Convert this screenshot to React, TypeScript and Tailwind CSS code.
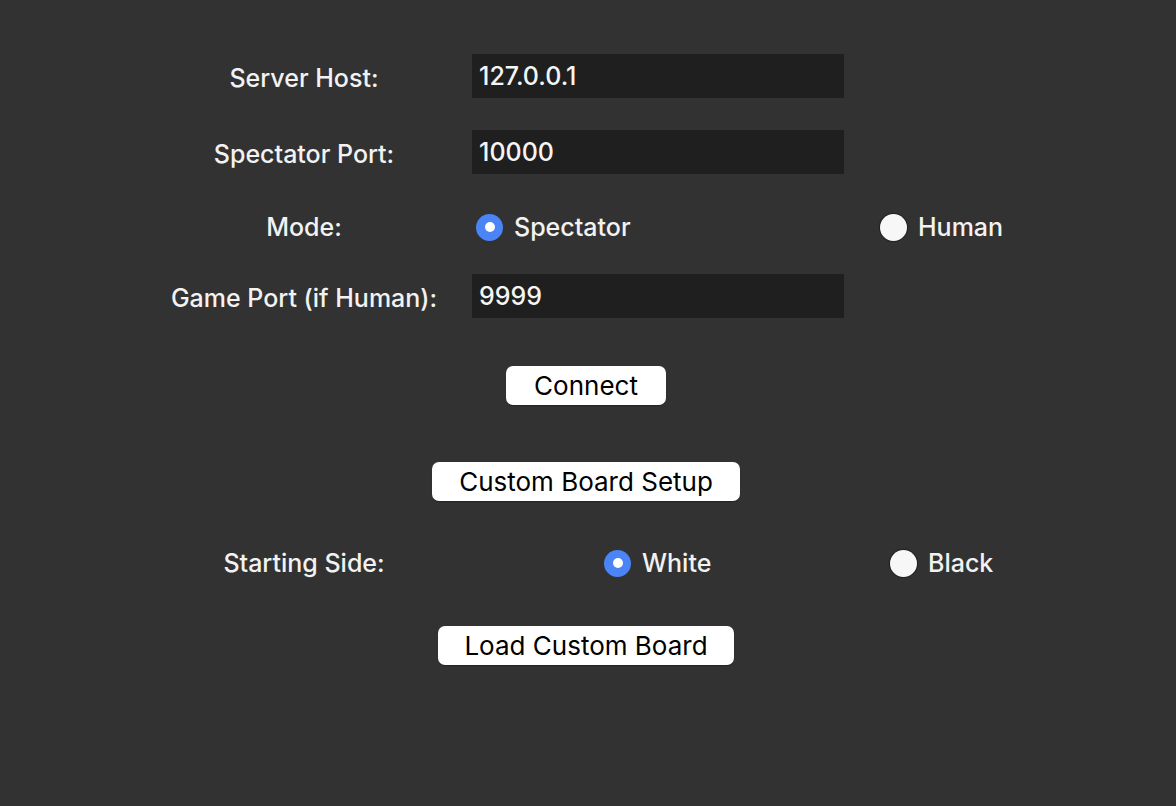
import React, { useState } from "react";

function Radio({
	label,
	checked,
	onSelect,
}: {
	label: string;
	checked: boolean;
	onSelect: () => void;
}) {
	return (
		<button
			type="button"
			onClick={onSelect}
			className="flex items-center gap-[11px] font-medium text-[#f2f2f2]"
		>
			{checked ? (
				<span className="flex h-[27px] w-[27px] items-center justify-center rounded-full bg-[#4a84f5]">
					<span className="h-[10px] w-[10px] rounded-full bg-white" />
				</span>
			) : (
				<span className="h-[27px] w-[27px] rounded-full bg-[#f7f7f7] shadow-[0_0_1px_1px_rgba(0,0,0,0.35)]" />
			)}
			<span>{label}</span>
		</button>
	);
}

function Field({ label, value }: { label: string; value: string }) {
	return (
		<div className="flex h-[44px] items-center">
			<div className="w-[288px] pt-[4px] text-center">{label}</div>
			<input
				defaultValue={value}
				className="ml-[24px] h-[44px] w-[372px] bg-[#1f1f1f] px-[7px] font-medium text-[#f5f5f5] outline-none"
			/>
		</div>
	);
}

function WhiteButton({ children, width }: { children: React.ReactNode; width: string }) {
	return (
		<button
			type="button"
			className={`h-[39px] ${width} rounded-[7px] bg-white text-[26px] font-normal text-black shadow-[0_1px_1px_rgba(0,0,0,0.3)]`}
		>
			{children}
		</button>
	);
}

export default function App() {
	const [mode, setMode] = useState<"spectator" | "human">("spectator");
	const [side, setSide] = useState<"white" | "black">("white");

	return (
		<div className="min-h-[806px] w-full bg-[#323232] font-['Inter','Liberation_Sans',sans-serif] text-[25px] font-medium leading-none text-[#f2f2f2]">
			<div className="pl-[160px] pt-[54px]">
				<Field label="Server Host:" value="127.0.0.1" />
				<div className="mt-[32px]">
					<Field label="Spectator Port:" value="10000" />
				</div>

				{/* Mode */}
				<div className="mt-[31px] flex h-[44px] items-center">
					<div className="w-[288px] text-center">Mode:</div>
					<div className="ml-[28px] w-[404px]">
						<Radio
							label="Spectator"
							checked={mode === "spectator"}
							onSelect={() => setMode("spectator")}
						/>
					</div>
					<Radio
						label="Human"
						checked={mode === "human"}
						onSelect={() => setMode("human")}
					/>
				</div>

				<div className="mt-[25px]">
					<Field label="Game Port (if Human):" value="9999" />
				</div>
			</div>

			<div className="flex w-[1172px] flex-col items-center">
				<div className="mt-[48px]">
					<WhiteButton width="w-[160px]">Connect</WhiteButton>
				</div>
				<div className="mt-[57px]">
					<WhiteButton width="w-[308px]">Custom Board Setup</WhiteButton>
				</div>
			</div>

			{/* Starting side */}
			<div className="mt-[40px] flex h-[44px] items-center pl-[160px]">
				<div className="w-[288px] text-center">Starting Side:</div>
				<div className="ml-[156px] w-[286px]">
					<Radio
						label="White"
						checked={side === "white"}
						onSelect={() => setSide("white")}
					/>
				</div>
				<Radio
					label="Black"
					checked={side === "black"}
					onSelect={() => setSide("black")}
				/>
			</div>

			<div className="flex w-[1172px] flex-col items-center">
				<div className="mt-[41px]">
					<WhiteButton width="w-[296px]">Load Custom Board</WhiteButton>
				</div>
			</div>
		</div>
	);
}
